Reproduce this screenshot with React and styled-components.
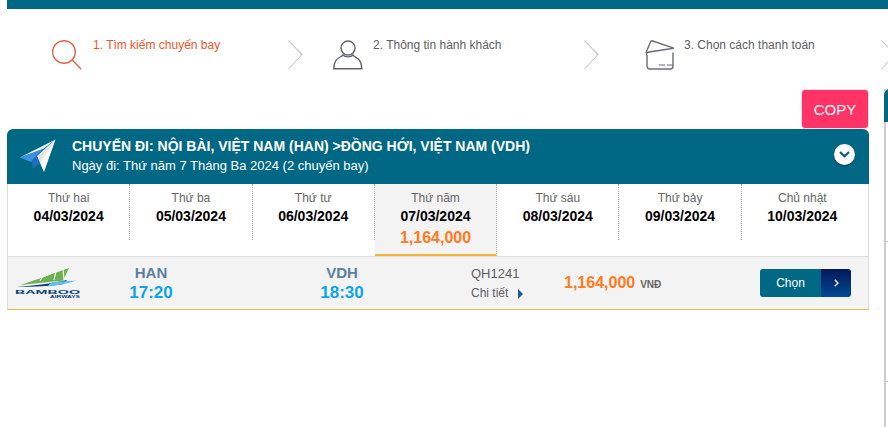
import React from 'react';
import styled, { createGlobalStyle } from 'styled-components';

const GlobalStyle = createGlobalStyle`
  html, body {
    margin: 0;
    padding: 0;
    background: #fff;
    overflow: hidden;
  }
  body {
    font-family: "Liberation Sans", Arial, sans-serif;
  }
`;

const Page = styled.div`
  width: 888px;
  height: 427px;
  padding-left: 7px;
  box-sizing: border-box;
  overflow: hidden;
`;

const TopBar = styled.div`
  height: 9px;
  width: 881px;
  background: #006885;
`;

const Steps = styled.div`
  display: grid;
  grid-template-columns: 296px 296px 297px;
  width: 889px;
  height: 80px;
`;

const Step = styled.div`
  display: flex;
  align-items: flex-start;
  padding: 31px 0 0 ${props => props.$left}px;
  box-sizing: border-box;
  svg { flex: none; }
`;

const StepLabel = styled.span`
  flex: 1;
  margin-left: ${props => props.$gap}px;
  margin-top: -2px;
  font-size: 12px;
  line-height: 14px;
  color: ${props => (props.$active ? '#f0562a' : '#5d5d63')};
`;

const Content = styled.div`
  display: flex;
  gap: 15px;
`;

const Main = styled.div`
  width: 862px;
  flex: none;
  display: flex;
  flex-direction: column;
  align-items: flex-end;
`;

const CopyButton = styled.button`
  width: 68px;
  height: 40px;
  padding: 0;
  border: 1px solid #f1dde3;
  border-radius: 4px;
  background: #ff3366;
  color: #fff;
  font-family: "Liberation Sans", Arial, sans-serif;
  font-size: 15px;
`;

const Panel = styled.section`
  width: 100%;
`;

const PanelHead = styled.header`
  position: relative;
  display: flex;
  align-items: center;
  height: 55px;
  box-sizing: border-box;
  padding-left: 12px;
  border-radius: 6px 6px 0 0;
  background: #006885;
  color: #fff;
  > svg { flex: none; margin-top: -1px; }
`;

const HeadText = styled.div`
  margin-left: 15px;
  margin-top: -1px;
`;

const HeadTitle = styled.div`
  font-size: 14px;
  font-weight: 700;
  line-height: 19px;
`;

const HeadSub = styled.div`
  font-size: 13px;
  line-height: 19px;
`;

const Toggle = styled.span`
  position: absolute;
  right: 14px;
  top: 15px;
  width: 21px;
  height: 21px;
  border-radius: 50%;
  background: #fff;
  box-shadow: 0 1px 2px rgba(0, 0, 0, 0.45);
  display: flex;
  align-items: center;
  justify-content: center;
`;

const Days = styled.div`
  display: flex;
  align-items: flex-start;
  height: 72px;
  padding-right: 5px;
  border-left: 1px solid #ddd;
  border-right: 1px solid #ddd;
`;

const Day = styled.div`
  flex: 1;
  box-sizing: border-box;
  height: ${props => (props.$active ? 72 : 56)}px;
  padding-top: 7px;
  text-align: center;
  border-right: 1px dotted #aaa;
  background: ${props => (props.$active ? '#f3f3f3' : 'transparent')};
  border-bottom: ${props => (props.$active ? '2px solid #f5b335' : 'none')};
  &:last-child { border-right: none; }
`;

const DayName = styled.div`
  font-size: 12px;
  line-height: 14px;
  color: #666;
`;

const DayDate = styled.div`
  margin-top: 4px;
  font-size: 14px;
  font-weight: 700;
  line-height: 15px;
  color: #000;
`;

const DayPrice = styled.div`
  margin-top: 5px;
  font-size: 16px;
  font-weight: 700;
  line-height: 17px;
  color: #ff7b1c;
`;

const FlightRow = styled.div`
  display: flex;
  align-items: center;
  height: 54px;
  box-sizing: border-box;
  background: #f3f3f3;
  border: 1px solid #ddd;
  border-bottom: 1px solid #eeb54b;
`;

const Logo = styled.div`
  flex: none;
  width: 102px;
  padding: 5px 0 0 6px;
  box-sizing: border-box;
`;

const Airport = styled.div`
  flex: none;
  width: 82px;
  margin-left: ${props => props.$offset || 0}px;
  text-align: center;
`;

const AirportCode = styled.div`
  font-size: 15px;
  font-weight: 700;
  line-height: 19px;
  color: #5b7f9f;
`;

const AirportTime = styled.div`
  font-size: 17px;
  font-weight: 700;
  line-height: 21px;
  color: #0fa3ea;
`;

const FlightInfo = styled.div`
  flex: none;
  width: 93px;
  margin-left: 88px;
  font-size: 12px;
  color: #5d5d63;
`;

const FlightNo = styled.div`
  font-size: 13px;
  line-height: 17px;
`;

const DetailLink = styled.div`
  display: flex;
  align-items: center;
  margin-top: 3px;
  line-height: 16px;
  svg { margin-left: 10px; margin-top: 1px; }
`;

const Price = styled.div`
  flex: none;
  width: 196px;
  display: flex;
  align-items: baseline;
`;

const PriceValue = styled.span`
  font-size: 16px;
  font-weight: 700;
  color: #ff7b1c;
`;

const Currency = styled.span`
  margin-left: 5px;
  font-size: 10px;
  font-weight: 700;
  color: #666;
`;

const ChooseButton = styled.div`
  flex: none;
  display: flex;
  width: 91px;
  height: 28px;
  border-radius: 3px;
  overflow: hidden;
  color: #fff;
  font-size: 12px;
`;

const ChooseLabel = styled.span`
  flex: 1;
  display: flex;
  align-items: center;
  justify-content: center;
  background: #006885;
`;

const ChooseArrow = styled.span`
  width: 30px;
  display: flex;
  align-items: center;
  justify-content: center;
  background: linear-gradient(180deg, #04175a 0%, #004a94 100%);
`;

const Sidebar = styled.aside`
  flex: none;
  width: 40px;
  height: 338px;
  border-left: 2px solid #ccc;
  box-sizing: border-box;
`;

const SideHead = styled.div`
  height: 33px;
  margin-left: -2px;
  border-radius: 6px 0 0 0;
  background: #006885;
`;

const SideRow = styled.div`
  height: ${props => props.$height}px;
  border-bottom: 1px solid #ccc;
  box-sizing: border-box;
`;

const SearchIcon = () => (
  <svg width="30" height="30" viewBox="0 0 30 30" fill="none" stroke="#e8604c" strokeWidth="1.4">
    <circle cx="12" cy="12" r="11.3" />
    <path d="M20.2 20 L29.2 29.2" />
  </svg>
);

const PersonIcon = () => (
  <svg width="30" height="30" viewBox="0 0 30 30" fill="none" stroke="#61646f" strokeWidth="1.4">
    <circle cx="15" cy="8" r="7" />
    <path d="M10 15 C8 18 1 17 .7 28.8 H28.8 C28.5 17 21.5 18 20 15 C18 17.5 12 17.5 10 15 Z" />
  </svg>
);

const CardIcon = () => (
  <svg width="30" height="30" viewBox="0 0 30 30" fill="none" stroke="#6a6d78" strokeWidth="1.4">
    <path d="M2 15 V25.5 Q2 29 5 29 H25.5 Q28 29 28 26 V12.5" />
    <path d="M1.5 15 Q1 12.5 4 12 L28.8 8.2 L7 .8 Q6 .6 5.5 2 L.8 13" />
    <path d="M14 25 H20 M22 25 H28" strokeWidth="1.1" />
  </svg>
);

const StepChevron = () => (
  <svg width="15" height="30" viewBox="0 0 15 30" fill="none" stroke="#c9c9c9" strokeWidth="1.1">
    <path d="M.5 .5 L14 14.5 L.5 29" />
  </svg>
);

const PlaneIcon = () => (
  <svg width="38" height="34" viewBox="0 0 38 34">
    <path d="M36.5 .5 L.8 18.5 L24 10 Z" fill="#f4f7f8" />
    <path d="M36.5 .5 L18 17 L25 33 Z" fill="#fdfdfd" />
    <path d="M36.5 .5 L18 17 L21 24 Z" fill="#dfe5e8" />
    <path d="M.8 18.5 L24 10 L14 21.5 L12 23 Z" fill="#3c8fdc" />
    <path d="M24 10 L13 21 L14 29.5 L21 24 L18 17 Z" fill="#1c6fbd" />
  </svg>
);

const BambooLogo = () => (
  <svg width="68" height="32" viewBox="0 0 68 32">
    <path d="M6 17 C20 13 40 5 55 0 L49 12.5 L6 17 Z" fill="#6db04f" />
    <path d="M26 13 L30 6 M40 12 L42 3 M50 12 L49 1" stroke="#f3f3f3" strokeWidth="1.2" />
    <path d="M3 18.5 C20 18 40 15 53 12 L50 16 C35 18.5 18 19 3 18.5 Z" fill="#0b3f7e" />
    <path d="M38 14 L62 12.5 C54 15.5 46 17 33 18.5 Z" fill="#5cc2ee" />
    <text x="1" y="26" fontFamily="Liberation Sans, Arial, sans-serif" fontWeight="700" fontSize="6" textLength="65" lengthAdjust="spacingAndGlyphs" fill="#0b3f7e">BAMBOO</text>
    <text x="36" y="29.5" fontFamily="Liberation Sans, Arial, sans-serif" fontWeight="700" fontSize="3" textLength="30" lengthAdjust="spacingAndGlyphs" fill="#0b3f7e">AIRWAYS</text>
  </svg>
);

const days = [
  ['Thứ hai', '04/03/2024'],
  ['Thứ ba', '05/03/2024'],
  ['Thứ tư', '06/03/2024'],
  ['Thứ năm', '07/03/2024', '1,164,000'],
  ['Thứ sáu', '08/03/2024'],
  ['Thứ bảy', '09/03/2024'],
  ['Chủ nhật', '10/03/2024'],
];

const App = () => (
  <Page>
    <GlobalStyle />
    <TopBar />
    <Steps>
      <Step $left={45}>
        <SearchIcon />
        <StepLabel $gap={11} $active>1. Tìm kiếm chuyến bay</StepLabel>
        <StepChevron />
      </Step>
      <Step $left={30}>
        <PersonIcon />
        <StepLabel $gap={10}>2. Thông tin hành khách</StepLabel>
        <StepChevron />
      </Step>
      <Step $left={46}>
        <CardIcon />
        <StepLabel $gap={9}>3. Chọn cách thanh toán</StepLabel>
        <StepChevron />
      </Step>
    </Steps>
    <Content>
      <Main>
        <CopyButton>COPY</CopyButton>
        <Panel>
          <PanelHead>
            <PlaneIcon />
            <HeadText>
              <HeadTitle>CHUYẾN ĐI: NỘI BÀI, VIỆT NAM (HAN) &gt;ĐỒNG HỚI, VIỆT NAM (VDH)</HeadTitle>
              <HeadSub>Ngày đi: Thứ năm 7 Tháng Ba 2024 (2 chuyến bay)</HeadSub>
            </HeadText>
            <Toggle>
              <svg width="11" height="7" viewBox="0 0 11 7" fill="none" stroke="#0c5a73" strokeWidth="2.2">
                <path d="M1 1 L5.5 5.2 L10 1" />
              </svg>
            </Toggle>
          </PanelHead>
          <Days>
            {days.map(([name, date, price]) => (
              <Day key={date} $active={!!price}>
                <DayName>{name}</DayName>
                <DayDate>{date}</DayDate>
                {price && <DayPrice>{price}</DayPrice>}
              </Day>
            ))}
          </Days>
          <FlightRow>
            <Logo><BambooLogo /></Logo>
            <Airport>
              <AirportCode>HAN</AirportCode>
              <AirportTime>17:20</AirportTime>
            </Airport>
            <Airport $offset={109}>
              <AirportCode>VDH</AirportCode>
              <AirportTime>18:30</AirportTime>
            </Airport>
            <FlightInfo>
              <FlightNo>QH1241</FlightNo>
              <DetailLink>
                Chi tiết
                <svg width="5" height="10" viewBox="0 0 5 10"><path d="M0 0 L5 5 L0 10 Z" fill="#1f5a96" /></svg>
              </DetailLink>
            </FlightInfo>
            <Price>
              <PriceValue>1,164,000</PriceValue>
              <Currency>VNĐ</Currency>
            </Price>
            <ChooseButton>
              <ChooseLabel>Chọn</ChooseLabel>
              <ChooseArrow>
                <svg width="5" height="8" viewBox="0 0 5 8" fill="none" stroke="#fff" strokeWidth="1.3">
                  <path d="M.8 .8 L4 4 L.8 7.2" />
                </svg>
              </ChooseArrow>
            </ChooseButton>
          </FlightRow>
        </Panel>
      </Main>
      <Sidebar>
        <SideHead />
        <SideRow $height={120} />
        <SideRow $height={140} />
      </Sidebar>
    </Content>
  </Page>
);

export default App;
